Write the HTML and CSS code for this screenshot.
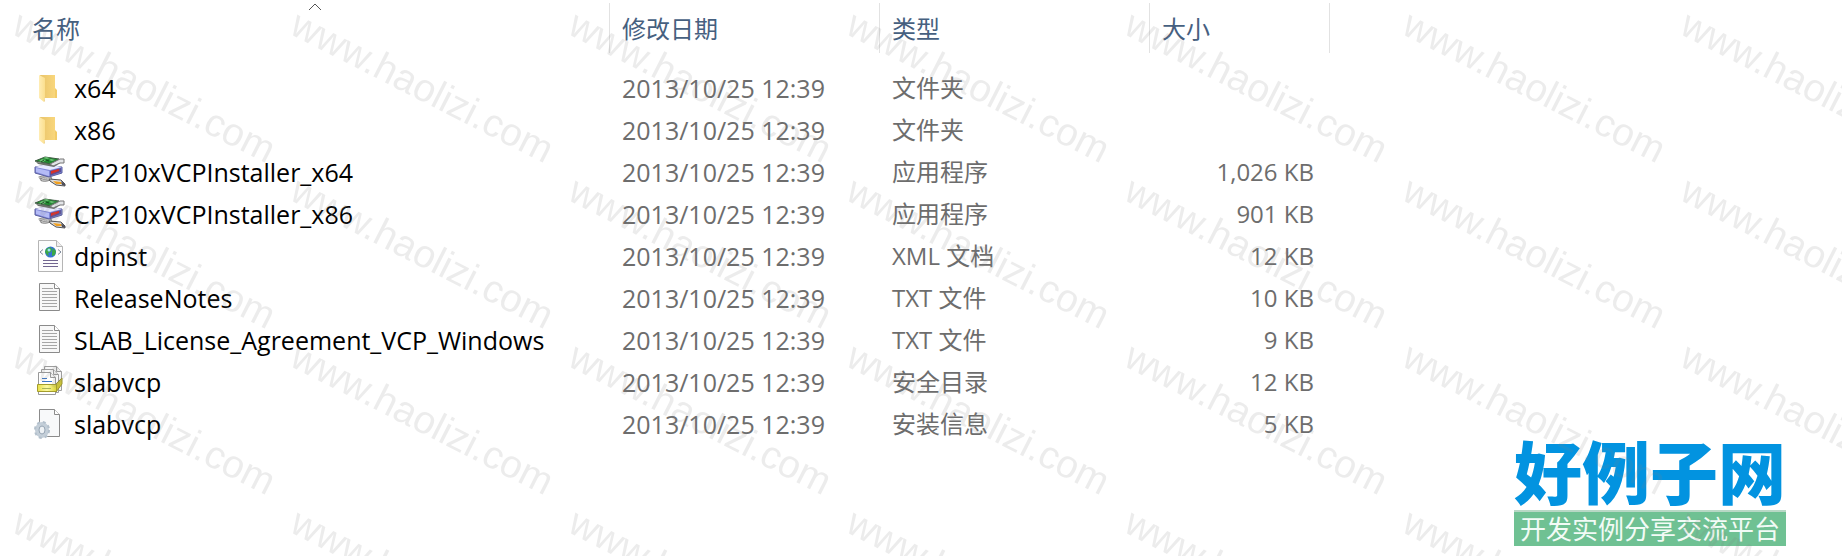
FILE: index.html
```html
<!DOCTYPE html>
<html lang="zh-CN">
<head>
<meta charset="utf-8">
<title>文件列表</title>
<link rel="stylesheet" href="styles.css">
</head>
<body>
<svg class="defs" aria-hidden="true">
  <defs>
    <linearGradient id="folder-back" x1="0" x2="1"><stop offset="0" stop-color="#e9c46a"/><stop offset="1" stop-color="#fbd97f"/></linearGradient>
    <linearGradient id="folder-flap" x1="0" x2="1"><stop offset="0" stop-color="#ffedb5"/><stop offset="1" stop-color="#fbdf8e"/></linearGradient>
    <linearGradient id="tray" x1="0" x2="1"><stop offset="0" stop-color="#e8e04a"/><stop offset=".5" stop-color="#fbf9a0"/><stop offset="1" stop-color="#dcd636"/></linearGradient>
    <symbol id="i-folder" viewBox="0 0 32 32">
      <path d="M6 3h15v14l2 2v7H10z" fill="url(#folder-back)"/>
      <path d="M21 16l2 2v8h-2z" fill="#f3cc68"/>
      <path d="M5 3l6 3v19l-1 5-5-4z" fill="url(#folder-flap)"/>
      <path d="M11 25l-1 5 1-1z" fill="#e8c878"/>
    </symbol>
    <symbol id="i-setup" viewBox="0 0 32 32">
      <path d="M5 22c4-2 8-1 11 0s-6 3-8 2 5-3 8-1 2 2 4 3" fill="none" stroke="#8a8a8a" stroke-width="3"/>
      <path d="M5 22c4-2 8-1 11 0s-6 3-8 2 5-3 8-1 2 2 4 3" fill="none" stroke="#d2d2d2" stroke-width="1"/>
      <path d="M15 23l12 1 4 4v2l-9-1-6-4z" fill="#dcdcdc" stroke="#555"/>
      <path d="M19 25l8 1 1 2-6 0z" fill="#f2a01e"/>
      <path d="M27 25l4 3v2l-3-1z" fill="#50505c"/>
      <path d="M1 11l12-2 15 2v6l-13 4L1 17z" fill="#7f86d8" stroke="#5a5f9e"/>
      <path d="M1 11l12-3 15 3-12 3z" fill="#e7e9ff"/>
      <path d="M2 12l13 3v5L2 16z" fill="#b4bbf6"/>
      <path d="M16 15l11-3v4l-11 4z" fill="#5b5197"/>
      <path d="M17 15l8-2v2l-8 3z" fill="#d83128"/>
      <path d="M2 6l17 2 9-5v3l-8 5L4 8z" fill="#6a706a"/>
      <path d="M1 5l10-4 14 2-8 5z" fill="#218a31" stroke="#3d5a41"/>
      <path d="M9 2l3-1 4 1-3 1zM5 5l3-2 4 1-3 2zM15 4l2-1 4 1-3 1z" fill="#6fc276"/>
      <path d="M12 4l3 1M7 6l3-2" stroke="#164d20"/>
      <path d="M16 8l10-5h4v4l-4 0-7 3z" fill="#e3e5e8" stroke="#777"/>
    </symbol>
    <symbol id="i-xml" viewBox="0 0 32 32">
      <path d="M4.500 .5h18l6 6v25h-24z" fill="#fcfcfc" stroke="#b5b5b5"/>
      <path d="M22.500 .5v6h6" fill="#eee" stroke="#b5b5b5"/>
      <circle cx="16.500" cy="12" r="5.500" fill="#3472d4"/>
      <path d="M12 9l4-2 2 2-1 3-3 1 1 3-2-1-2-3zM19 8l3 3-1 4-3 1 0-4z" fill="#39a845"/>
      <circle cx="15" cy="10" r="1.500" fill="#9ce0f4"/>
      <path d="M9 9.500l-3 2.500 3 2.500M24 9.500l3 2.500-3 2.500" fill="none" stroke="#7a8798"/>
      <path d="M9 20.500h15M9 23.500h15M9 26.500h15" stroke="#71658f"/>
    </symbol>
    <symbol id="i-txt" viewBox="0 0 32 32">
      <path d="M5.500 1.500h15l5 5v22h-20z" fill="#f8f8f8" stroke="#8b8b8b"/>
      <path d="M20.500 1.500v5h5" fill="#fff" stroke="#8b8b8b"/>
      <path d="M8 6.500h11M8 9.500h15M8 12.500h15M8 15.500h15M8 18.500h15M8 21.500h15M8 24.500h15" stroke="#a6a6a6"/>
    </symbol>
    <symbol id="i-catalog" viewBox="0 0 32 32">
      <path d="M10.500 .5h12l5 5v19h-17z" fill="#f6f6f6" stroke="#9d9d9d"/>
      <path d="M7.500 3.500h12l5 5v18h-17z" fill="#f9f9f9" stroke="#9d9d9d"/>
      <path d="M4.500 6.500h12l5 5v17h-17z" fill="#fff" stroke="#999"/>
      <path d="M22.500 .5v5h5M19.500 3.500v5h5M16.500 6.500v5h5" fill="#eee" stroke="#999"/>
      <path d="M8 12.500h5M8 15.500h10" stroke="#3976c8"/>
      <path d="M22 18l6-6v6l-6 8z" fill="#c9c23a" stroke="#99932e"/>
      <path d="M3.500 18.500h19v7h-19z" fill="url(#tray)" stroke="#a49d2c"/>
      <path d="M8 22.500h9" stroke="#a7b45b"/>
    </symbol>
    <symbol id="i-inf" viewBox="0 0 32 32">
      <path d="M5.500 1.500h15l5 5v22h-20z" fill="#f8f9fa" stroke="#8b8b8b"/>
      <path d="M20.500 1.500v5h5" fill="#fff" stroke="#8b8b8b"/>
      <ellipse cx="8" cy="22" rx="5" ry="6" fill="none" stroke="#c3ced8" stroke-width="4"/>
      <ellipse cx="8" cy="22" rx="7" ry="8" fill="none" stroke="#b3c0cc" stroke-width="2" stroke-dasharray="3 3"/>
      <ellipse cx="8" cy="22" rx="3" ry="4" fill="#eef2f5" stroke="#95a4b3"/>
    </symbol>
  </defs>
</svg>

<main class="explorer">
  <table class="files">
    <colgroup>
      <col class="col-name"><col class="col-date"><col class="col-type"><col class="col-size"><col>
    </colgroup>
    <thead>
      <tr>
        <th scope="col" aria-sort="ascending">
          <svg class="sort" viewBox="0 0 14 8" aria-hidden="true"><path d="M1 7l6-6 6 6" fill="none" stroke="#555"/></svg>
          <button class="head" type="button">名称</button>
        </th>
        <th scope="col"><button class="head" type="button">修改日期</button></th>
        <th scope="col"><button class="head" type="button">类型</button></th>
        <th scope="col"><button class="head" type="button">大小</button></th>
        <td></td>
      </tr>
    </thead>
    <tbody>
      <tr><td><div class="name"><svg class="icon"><use href="#i-folder"/></svg>x64</div></td><td class="date">2013/10/25 12:39</td><td>文件夹</td><td class="size"></td><td></td></tr>
      <tr><td><div class="name"><svg class="icon"><use href="#i-folder"/></svg>x86</div></td><td class="date">2013/10/25 12:39</td><td>文件夹</td><td class="size"></td><td></td></tr>
      <tr><td><div class="name"><svg class="icon"><use href="#i-setup"/></svg>CP210xVCPInstaller_x64</div></td><td class="date">2013/10/25 12:39</td><td>应用程序</td><td class="size">1,026 KB</td><td></td></tr>
      <tr><td><div class="name"><svg class="icon"><use href="#i-setup"/></svg>CP210xVCPInstaller_x86</div></td><td class="date">2013/10/25 12:39</td><td>应用程序</td><td class="size">901 KB</td><td></td></tr>
      <tr><td><div class="name"><svg class="icon"><use href="#i-xml"/></svg>dpinst</div></td><td class="date">2013/10/25 12:39</td><td>XML 文档</td><td class="size">12 KB</td><td></td></tr>
      <tr><td><div class="name"><svg class="icon"><use href="#i-txt"/></svg>ReleaseNotes</div></td><td class="date">2013/10/25 12:39</td><td>TXT 文件</td><td class="size">10 KB</td><td></td></tr>
      <tr><td><div class="name"><svg class="icon"><use href="#i-txt"/></svg>SLAB_License_Agreement_VCP_Windows</div></td><td class="date">2013/10/25 12:39</td><td>TXT 文件</td><td class="size">9 KB</td><td></td></tr>
      <tr><td><div class="name"><svg class="icon"><use href="#i-catalog"/></svg>slabvcp</div></td><td class="date">2013/10/25 12:39</td><td>安全目录</td><td class="size">12 KB</td><td></td></tr>
      <tr><td><div class="name"><svg class="icon"><use href="#i-inf"/></svg>slabvcp</div></td><td class="date">2013/10/25 12:39</td><td>安装信息</td><td class="size">5 KB</td><td></td></tr>
    </tbody>
  </table>
</main>

<aside class="brand">
  <div class="brand-name">好例子网</div>
  <div class="brand-tag">开发实例分享交流平台</div>
</aside>

<svg class="watermark" aria-hidden="true">
  <defs>
    <pattern id="mark" x="3" y="10" width="278" height="166" patternUnits="userSpaceOnUse">
      <text class="mark-text" transform="translate(7 23) rotate(27)">www.haolizi.com</text>
    </pattern>
  </defs>
  <rect width="100%" height="100%" fill="url(#mark)"/>
</svg>
</body>
</html>
```

FILE: styles.css
```css
* { box-sizing: border-box; }

body {
  margin: 0;
  min-height: 100vh;
  position: relative;
  overflow: hidden;
  background: #fff;
  color: #6d6d6d;
  font-family: "Open Sans", "Noto Sans CJK SC", sans-serif;
  font-size: 24px;
  line-height: 32px;
}

.defs { position: absolute; width: 0; height: 0; }

.explorer { padding: 3px 0 0 20px; }

.files {
  width: 100%;
  table-layout: fixed;
  border-collapse: separate;
  border-spacing: 0;
}

.col-name { width: 590px; }
.col-date, .col-type { width: 270px; }
.col-size { width: 180px; }

th {
  position: relative;
  height: 50px;
  padding: 2px 0 0;
  border-right: 1px solid #e2e2e2;
  text-align: left;
  vertical-align: middle;
}

.head {
  display: block;
  width: 100%;
  padding: 0 12px;
  border: 0;
  background: none;
  color: #46607f;
  font: inherit;
  font-weight: 400;
  text-align: left;
}

.sort {
  position: absolute;
  top: 0;
  left: 50%;
  width: 14px;
  height: 8px;
  margin-left: -7px;
}

tbody::before {
  content: "";
  display: table-row;
  height: 14px;
}

tbody td {
  height: 42px;
  padding: 0 12px;
  white-space: nowrap;
}

.name {
  display: flex;
  align-items: center;
  gap: 8px;
  padding-left: 2px;
  color: #000;
  font-size: 25px;
}

.icon { flex: none; width: 32px; height: 32px; }

tbody .date { font-size: 25px; }

tbody .size { padding-right: 16px; text-align: right; }

.brand {
  position: absolute;
  right: 56px;
  bottom: 10px;
  text-align: center;
}

.brand-name {
  padding-bottom: 4px;
  color: #0293e0;
  font-family: "Noto Sans CJK SC", sans-serif;
  font-size: 68px;
  font-weight: 900;
  line-height: 72px;
}

.brand-tag {
  padding: 0 6px 2px;
  border-top: 2px solid #b8d8c5;
  background: #6fc193;
  color: #f2fbf6;
  font-family: "Noto Sans CJK SC", sans-serif;
  font-size: 26px;
  line-height: 32px;
}

.watermark {
  position: absolute;
  inset: 0;
  width: 100%;
  height: 100%;
  pointer-events: none;
}

.mark-text {
  fill: #808080;
  fill-opacity: 0.15;
  font-family: "Liberation Sans", Arial, sans-serif;
  font-size: 39px;
}
```
